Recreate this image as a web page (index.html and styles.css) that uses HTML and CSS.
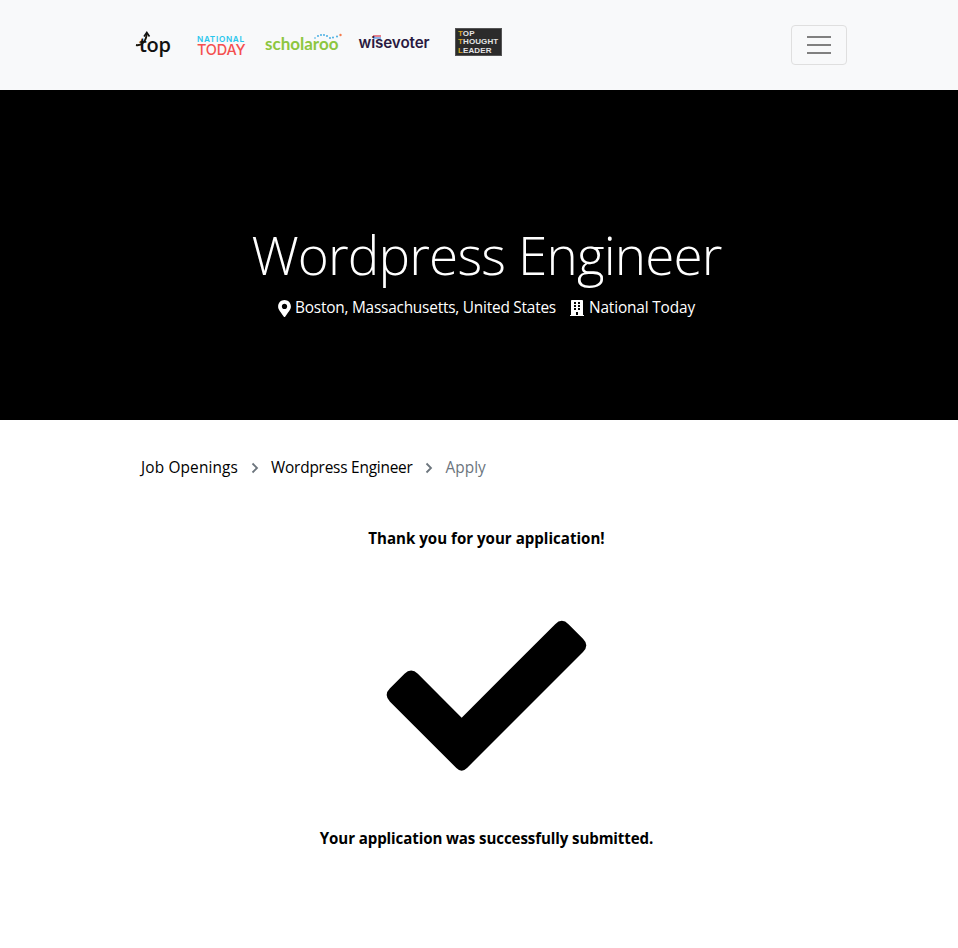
FILE: index.html
```html
<!DOCTYPE html>
<html lang="en">
<head>
<meta charset="utf-8">
<title>Wordpress Engineer</title>
<link rel="stylesheet" href="styles.css">
</head>
<body>
<nav class="navbar">
  <div class="logos">
    <svg class="logo logo-top" viewBox="0 0 38 30" aria-label="top">
      <text x="5" y="25" class="t-top">top</text>
      <path d="M2 18 C7 19 12 15 12.700 7" class="top-swoosh"/>
      <path d="M10 9.500 L12.800 5.500 L15.500 9.500" class="top-arrow"/>
    </svg>
    <svg class="logo logo-today" viewBox="0 0 48 30">
      <text x="0" y="15" class="t-national">NATIONAL</text>
      <text x="0" y="27.500" class="t-today">TODAY</text>
    </svg>
    <svg class="logo logo-scholaroo" viewBox="0 0 78 30">
      <text x="0" y="23" class="t-scholaroo">scholaroo</text>
      <g class="dots">
        <circle cx="50" cy="11" r=".8"/><circle cx="53" cy="9" r=".9"/><circle cx="56" cy="8" r=".9"/><circle cx="59" cy="8" r=".9"/><circle cx="62" cy="9" r=".9"/><circle cx="65" cy="11" r=".9"/><circle cx="68" cy="10.500" r=".9"/><circle cx="72" cy="9.500" r=".9"/>
      </g>
      <circle cx="75.500" cy="8" r="1.200" class="dot-orange"/>
    </svg>
    <svg class="logo logo-wise" viewBox="0 0 74 30">
      <path d="M15 9 L23 9" class="flag-red"/><path d="M15 11 L23 11" class="flag-blue"/>
      <text x="0.500" y="20.500" class="t-wise">wisevoter</text>
    </svg>
    <div class="ttl">
      <span class="ttl-line"><b>T</b>OP</span>
      <span class="ttl-line"><b>T</b>HOUGHT</span>
      <span class="ttl-line"><b>L</b>EADER</span>
    </div>
  </div>
  <button class="toggler" aria-label="Toggle navigation">
    <span class="bar"></span><span class="bar"></span><span class="bar"></span>
  </button>
</nav>

<header class="hero">
  <div class="hero-inner">
    <h1 class="title">Wordpress Engineer</h1>
    <p class="meta">
      <svg class="ico-pin" viewBox="0 0 384 512"><path d="M172.300 501.700C27 291 0 269.400 0 192 0 86 86 0 192 0s192 86 192 192c0 77.400-27 99-172.300 309.700-9.500 13.800-29.900 13.800-39.400 0zM192 272c44.200 0 80-35.800 80-80s-35.800-80-80-80-80 35.800-80 80 35.800 80 80 80z"/></svg>
      <span class="meta-text meta-place">Boston, Massachusetts, United States</span>
      <svg class="ico-building" viewBox="0 0 448 512"><path fill-rule="evenodd" d="M436 480h-20V24c0-13.300-10.700-24-24-24H56C42.700 0 32 10.700 32 24v456H12c-6.600 0-12 5.400-12 12v20h448v-20c0-6.600-5.400-12-12-12zM128 76c0-6.600 5.400-12 12-12h40c6.600 0 12 5.400 12 12v40c0 6.600-5.400 12-12 12h-40c-6.600 0-12-5.400-12-12V76zm0 96c0-6.600 5.400-12 12-12h40c6.600 0 12 5.400 12 12v40c0 6.600-5.400 12-12 12h-40c-6.600 0-12-5.400-12-12v-40zm52 148h-40c-6.600 0-12-5.400-12-12v-40c0-6.600 5.400-12 12-12h40c6.600 0 12 5.400 12 12v40c0 6.600-5.400 12-12 12zm76 160h-64v-84c0-6.600 5.400-12 12-12h40c6.600 0 12 5.400 12 12v84zm64-172c0 6.600-5.400 12-12 12h-40c-6.600 0-12-5.400-12-12v-40c0-6.600 5.400-12 12-12h40c6.600 0 12 5.400 12 12v40zm0-96c0 6.600-5.400 12-12 12h-40c-6.600 0-12-5.400-12-12v-40c0-6.600 5.400-12 12-12h40c6.600 0 12 5.400 12 12v40zm0-96c0 6.600-5.400 12-12 12h-40c-6.600 0-12-5.400-12-12V76c0-6.600 5.400-12 12-12h40c6.600 0 12 5.400 12 12v40z"/></svg>
      <span class="meta-text meta-company">National Today</span>
    </p>
  </div>
</header>

<main class="content">
  <ol class="crumbs">
    <li class="crumb crumb-first">Job Openings</li>
    <li class="sep"><svg viewBox="0 0 10 12"><path d="M2.500 1.500 L7 6 L2.500 10.500"/></svg></li>
    <li class="crumb crumb-mid">Wordpress Engineer</li>
    <li class="sep"><svg viewBox="0 0 10 12"><path d="M2.500 1.500 L7 6 L2.500 10.500"/></svg></li>
    <li class="crumb crumb-active">Apply</li>
  </ol>
  <p class="msg msg-thanks">Thank you for your application!</p>
  <svg class="check" viewBox="0 0 699 510">
    <path d="M275 323 L143.500 191.500 Q123.500 171.500 103.500 191.500 L60 235 Q40 255 60 275 L259 474 Q275 490 291 474 L639 126 Q659 106 639 86 L595.500 42.500 Q575.500 22.500 555.500 42.500 Z"/>
  </svg>
  <p class="msg msg-done">Your application was successfully submitted.</p>
</main>
</body>
</html>
```

FILE: styles.css
```css
* { box-sizing: border-box; }

html, body { margin: 0; padding: 0; }

body {
  font-family: "Open Sans", "Noto Sans", sans-serif;
  font-size: 15.4px;
  line-height: 24px;
  color: #000;
  background: #fff;
  height: 948px;
  overflow: hidden;
}

.navbar {
  height: 90px;
  background: #f8f9fa;
  padding: 0 111px 0 134px;
  display: flex;
  align-items: center;
  justify-content: space-between;
}

.logos {
  display: flex;
  align-items: center;
  margin-top: -6px;
}

.logo { display: block; height: 30px; overflow: visible; }
.logo-top { width: 38px; margin-right: 25px; }
.logo-today { width: 48px; margin-right: 20px; }
.logo-scholaroo { width: 78px; margin-right: 15px; }
.logo-wise { width: 74px; margin-right: 23px; }

.t-top { font: 600 20px "Open Sans", sans-serif; fill: #111; letter-spacing: -.3px; }
.top-swoosh { fill: none; stroke: #1a1408; stroke-width: 2; }
.top-arrow { fill: none; stroke: #111; stroke-width: 1.600; }
.t-national { font: 600 8.200px "Inter", sans-serif; fill: #29c6ec; letter-spacing: .7px; }
.t-today { font: 500 14.500px "Inter", sans-serif; fill: #f4504f; letter-spacing: -.2px; }
.t-scholaroo { font: 700 17px "Lato", sans-serif; fill: #8dc63f; letter-spacing: 0; }
.dots { fill: #37a8e0; }
.dot-orange { fill: #f47b4b; }
.flag-red { stroke: #e0596a; stroke-width: 1.500; fill: none; }
.flag-blue { stroke: #6b9de0; stroke-width: 1.500; fill: none; }
.t-wise { font: 600 15.200px "Inter", sans-serif; fill: #2a1a40; letter-spacing: -.1px; }

.ttl {
  width: 47px;
  height: 28px;
  background: #2b2b2b;
  border: 1px solid #555;
  padding: 1px 0 0 2px;
  display: flex;
  flex-direction: column;
  color: #e4e4e4;
  font: 700 8px/8.300px "Liberation Sans", sans-serif;
  letter-spacing: .1px;
}
.ttl-line b { color: #d9a520; font-weight: 700; }

.toggler {
  width: 56px;
  height: 40px;
  padding: 0;
  background: transparent;
  border: 1px solid #dfdfdf;
  border-radius: 4px;
  display: flex;
  flex-direction: column;
  align-items: center;
  justify-content: center;
  gap: 6px;
}
.bar { display: block; width: 24px; height: 2px; background: #808080; }

.hero {
  height: 330px;
  background: #000;
  color: #fff;
  padding: 132px 111px 0 126px;
}
.hero-inner { text-align: center; }
.title {
  margin: 0;
  font-family: "Open Sans", "Noto Sans", sans-serif;
  font-size: 53px;
  font-weight: 300;
  line-height: 66px;
  letter-spacing: -.83px;
}
.meta {
  margin: 8px 0 0;
  display: flex;
  justify-content: center;
  align-items: center;
}
.meta-place { letter-spacing: -.22px; }
.meta-company { letter-spacing: -.15px; }
.ico-pin { width: 13px; height: 17px; fill: #fff; margin-right: 4px; }
.ico-building { width: 14px; height: 16px; fill: #fff; margin: 0 5px 0 14px; }

.content { padding: 0 111px 0 126px; }

.crumbs {
  list-style: none;
  margin: 0;
  padding: 25px 15px 0;
  display: flex;
  align-items: center;
  height: 71px;
}
.crumb-first { letter-spacing: .15px; }
.crumb-mid { letter-spacing: -.22px; }
.sep { width: 33px; display: flex; justify-content: center; }
.sep svg { width: 10px; height: 12px; fill: none; stroke: #6c757d; stroke-width: 1.800; }
.crumb-active { color: #6c757d; }

.msg {
  margin: 0;
  text-align: center;
  font-size: 15.100px;
  font-weight: 700;
}
.msg-thanks { margin-top: 35px; }
.check { display: block; width: 233px; height: 170px; margin: 60px auto 0; }
.msg-done { margin-top: 46px; letter-spacing: -.11px; }
```
